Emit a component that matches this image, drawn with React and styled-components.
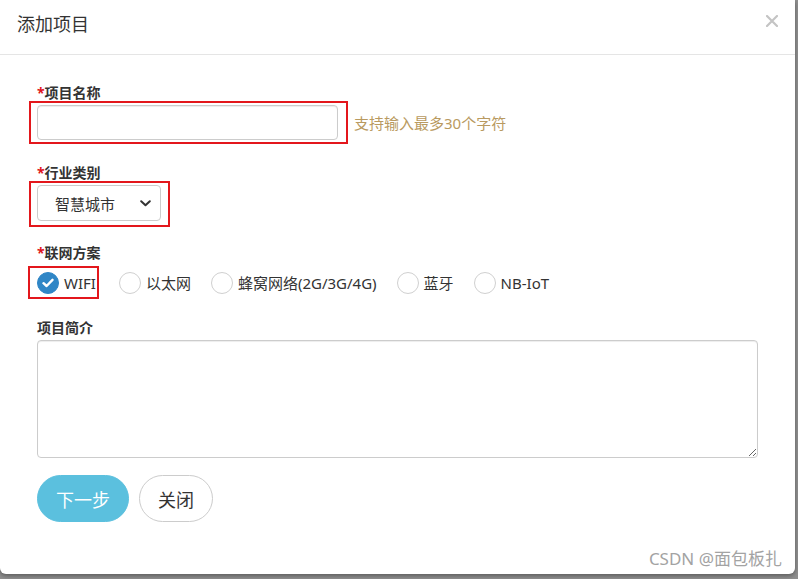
import React from "react";
import styled, { createGlobalStyle } from "styled-components";

const Global = createGlobalStyle`
  html, body { margin: 0; padding: 0; }
  body {
    background: #8f8f8f;
    font-family: "Noto Sans", "Noto Sans CJK SC", sans-serif;
    color: #333;
    width: 798px;
    height: 579px;
    overflow: hidden;
  }
  * { box-sizing: border-box; }
`;

const Modal = styled.div`
  position: relative;
  width: 795px;
  height: 574px;
  background: #fff;
  border-radius: 0 0 6px 6px;
  box-shadow: 0 2px 4px rgba(0, 0, 0, 0.35);
`;

const Header = styled.div`
  display: flex;
  justify-content: space-between;
  align-items: flex-start;
  height: 55px;
  padding: 12px 17px 0 17px;
  border-bottom: 1px solid #e5e5e5;
`;

const Title = styled.h4`
  margin: 0;
  font-size: 18px;
  line-height: 24px;
  font-weight: 400;
  color: #333;
`;

const Close = styled.button`
  display: flex;
  padding: 0;
  margin-top: 3px;
  border: 0;
  background: none;
  cursor: pointer;
`;

const Body = styled.div`
  padding: 30px 37px 0 37px;
`;

const Label = styled.div`
  margin-top: ${(p) => p.$mt || 0}px;
  font-size: 14px;
  line-height: 16px;
  font-weight: 700;
  color: #333;
`;

const Star = styled.span`
  color: #e0141e;
`;

const Annot = styled.div`
  display: inline-flex;
  align-items: center;
  border: 2px solid #e3171c;
  margin-left: ${(p) => p.$ml}px;
  padding: ${(p) => p.$pad};
`;

const Row = styled.div`
  display: flex;
  align-items: center;
  gap: ${(p) => p.$gap || 0}px;
  margin-top: ${(p) => p.$mt || 0}px;
`;

const TextInput = styled.input`
  width: 301px;
  height: 35px;
  border: 1px solid #ccc;
  border-radius: 4px;
  box-shadow: inset 0 1px 1px rgba(0, 0, 0, 0.075);
  padding: 6px 12px;
  font: inherit;
  font-size: 14px;
  outline: none;
`;

const Hint = styled.span`
  margin-left: 6px;
  font-size: 15px;
  line-height: 20px;
  color: #b99a60;
`;

const SelectBox = styled.div`
  display: flex;
  align-items: center;
  justify-content: space-between;
  width: 124px;
  height: 36px;
  padding: 0 9px 0 17px;
  border: 1px solid #ccc;
  border-radius: 4px;
  font-size: 15px;
  color: #333;
  background: #fff;
`;

const RadioItem = styled.label`
  display: flex;
  align-items: center;
  gap: 5px;
  height: 29px;
  font-size: 15px;
  line-height: 20px;
  color: #333;
`;

const Circle = styled.span`
  display: flex;
  align-items: center;
  justify-content: center;
  width: 22px;
  height: 22px;
  border-radius: 50%;
  border: 1px solid ${(p) => (p.$on ? "#2f86c6" : "#d0d0d0")};
  background: ${(p) => (p.$on ? "#2f86c6" : "#fff")};
`;

const TextArea = styled.textarea`
  display: block;
  margin-top: 4px;
  width: 721px;
  height: 118px;
  border: 1px solid #ccc;
  border-radius: 4px;
  box-shadow: inset 0 1px 1px rgba(0, 0, 0, 0.075);
  font: inherit;
  outline: none;
  resize: vertical;
`;

const Btn = styled.button`
  height: 47px;
  padding: 0 18px;
  border-radius: 24px;
  font-family: "Noto Sans CJK SC", sans-serif;
  font-size: 18px;
  border: 1px solid ${(p) => (p.$primary ? "#5bc0de" : "#ccc")};
  background: ${(p) => (p.$primary ? "#5bc0de" : "#fff")};
  color: ${(p) => (p.$primary ? "#fff" : "#333")};
  cursor: pointer;
`;

const Watermark = styled.div`
  position: absolute;
  right: 13px;
  bottom: 5px;
  font-size: 17px;
  line-height: 20px;
  color: #a3a3a3;
  white-space: nowrap;
`;

const Check = () => (
  <svg width="12" height="10" viewBox="0 0 12 10">
    <path d="M1.5 5.2 L4.6 8 L10.5 1.8" fill="none" stroke="#fff" strokeWidth="2.4" strokeLinecap="round" strokeLinejoin="round" />
  </svg>
);

const Radio = ({ on, children }) => (
  <RadioItem>
    <Circle $on={on}>{on && <Check />}</Circle>
    {children}
  </RadioItem>
);

export default function App() {
  return (
    <>
      <Global />
      <Modal>
        <Header>
          <Title>添加项目</Title>
          <Close aria-label="close">
            <svg width="12" height="12" viewBox="0 0 12 12">
              <path d="M1 1 L11 11 M11 1 L1 11" stroke="#c4c4c4" strokeWidth="2.2" strokeLinecap="round" />
            </svg>
          </Close>
        </Header>
        <Body>
          <Label>
            <Star>*</Star>项目名称
          </Label>
          <Row>
            <Annot $ml={-8} $pad="2px 8px 2px 6px">
              <TextInput />
            </Annot>
            <Hint>支持输入最多30个字符</Hint>
          </Row>

          <Label $mt={21}>
            <Star>*</Star>行业类别
          </Label>
          <Annot $ml={-8} $pad="2px 7px 4px 6px">
            <SelectBox>
              智慧城市
              <svg width="11" height="7" viewBox="0 0 11 7">
                <path d="M1.2 1.2 L5.5 5.3 L9.8 1.2" fill="none" stroke="#333" strokeWidth="2" strokeLinecap="round" strokeLinejoin="round" />
              </svg>
            </SelectBox>
          </Annot>

          <Label $mt={18}>
            <Star>*</Star>联网方案
          </Label>
          <Row $gap={20} $mt={5}>
            <Annot $ml={-9} $pad="0 1px 0 7px">
              <Radio on>WIFI</Radio>
            </Annot>
            <Radio>以太网</Radio>
            <Radio>蜂窝网络(2G/3G/4G)</Radio>
            <Radio>蓝牙</Radio>
            <Radio>NB-IoT</Radio>
          </Row>

          <Label $mt={21}>项目简介</Label>
          <TextArea />

          <Row $gap={10} $mt={17}>
            <Btn $primary>下一步</Btn>
            <Btn>关闭</Btn>
          </Row>
        </Body>
        <Watermark>CSDN @面包板扎</Watermark>
      </Modal>
    </>
  );
}
